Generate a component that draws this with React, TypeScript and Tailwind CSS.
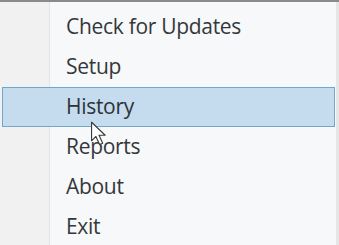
const items = ["Check for Updates", "Setup", "History", "Reports", "About", "Exit"];

function Cursor() {
  return (
    <svg
      width="18"
      height="26"
      viewBox="0 0 14 21"
      className="absolute left-[90px] top-[119px]"
    >
      <path
        d="M1 1 L1 16 L4.5 12.5 L7.5 19 L10 18 L7 11.5 L12 11.5 Z"
        fill="#fff"
        stroke="#3a3a3a"
        strokeWidth="0.9"
        strokeLinejoin="round"
      />
    </svg>
  );
}

export default function App() {
  return (
    <main className="relative h-[245px] w-[339px] overflow-hidden border-t-2 border-[#8a8a8a] bg-[#f7f8f9] font-['Open_Sans',sans-serif]">
      <div className="flex h-full">
        {/* gutter */}
        <div className="w-[50px] shrink-0 border-r border-[#e4e4e4] bg-[#f1f1f1]" />
        <div className="flex-1 border-r-[3px] border-[#e6e6e6]" />
      </div>

      {/* menu items */}
      <ul className="absolute inset-x-0 top-[5px] flex flex-col">
        {items.map((label) => {
          const active = label === "History";
          return (
            <li
              key={label}
              className={
                active
                  ? "mx-[2px] mr-[4px] flex h-[40px] items-center border border-[#74a6c9] bg-[#c4dcee] pl-[63px] text-[21px] font-medium tracking-[-0.3px] text-[#2e3338]"
                  : "mx-[2px] mr-[4px] flex h-[40px] items-center border border-transparent pl-[63px] text-[21px] font-medium tracking-[-0.3px] text-[#34373a]"
              }
            >
              {label}
            </li>
          );
        })}
      </ul>

      <Cursor />
    </main>
  );
}
